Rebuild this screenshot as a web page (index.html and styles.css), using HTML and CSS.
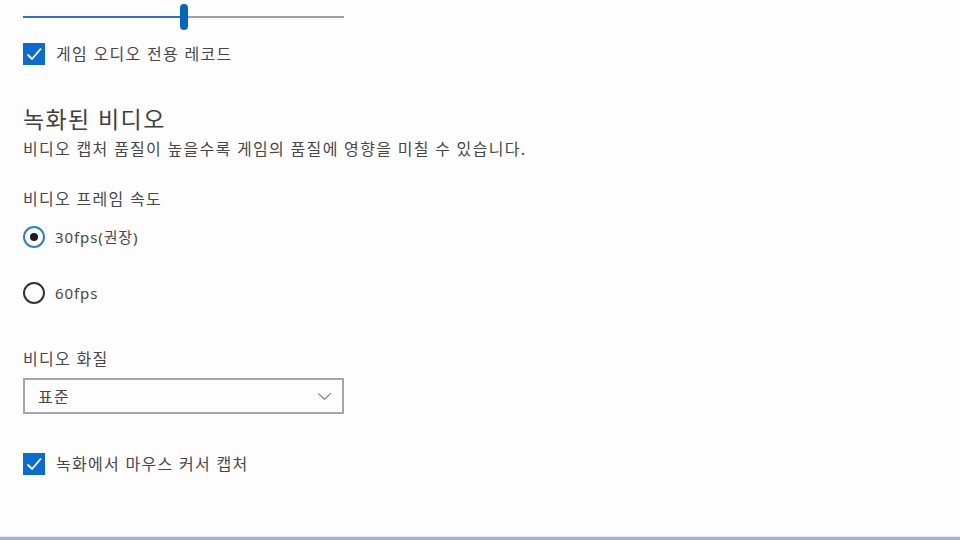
FILE: index.html
```html
<!DOCTYPE html>
<html lang="ko">
<head>
<meta charset="utf-8">
<link rel="stylesheet" href="styles.css">
</head>
<body>
<div class="page">
  <div class="slider">
    <div class="track-fill"></div>
    <div class="thumb"></div>
    <div class="track-rest"></div>
  </div>

  <label class="check row-audio">
    <span class="box"><svg viewBox="0 0 20 20" width="20" height="20"><path d="M3.5 10.5 L8 15 L17 4.5" fill="none" stroke="#fff" stroke-width="1.8"/></svg></span>
    <span class="label">게임 오디오 전용 레코드</span>
  </label>

  <h2 class="title">녹화된 비디오</h2>
  <p class="desc">비디오 캡처 품질이 높을수록 게임의 품질에 영향을 미칠 수 있습니다.</p>

  <div class="field-label fps-label">비디오 프레임 속도</div>

  <div class="radios">
    <div class="radio checked"><span class="ring"><span class="dot"></span></span><span class="rlabel">30fps(권장)</span></div>
    <div class="radio"><span class="ring"></span><span class="rlabel">60fps</span></div>
  </div>

  <div class="field-label quality-label">비디오 화질</div>
  <div class="select">
    <span class="value">표준</span>
    <svg class="chev" viewBox="0 0 16 10" width="15" height="9"><path d="M1 1.5 L8 8 L15 1.5" fill="none" stroke="#7a7a7a" stroke-width="1.2"/></svg>
  </div>

  <label class="check row-cursor">
    <span class="box"><svg viewBox="0 0 20 20" width="20" height="20"><path d="M3.5 10.5 L8 15 L17 4.5" fill="none" stroke="#fff" stroke-width="1.8"/></svg></span>
    <span class="label">녹화에서 마우스 커서 캡처</span>
  </label>
</div>
<div class="bottom-line"></div>
</body>
</html>
```

FILE: styles.css
```css
html, body {
  margin: 0;
  padding: 0;
  background: #fdfdfd;
  width: 960px;
  height: 540px;
  overflow: hidden;
}
body {
  font-family: "Noto Sans", "Noto Sans CJK KR", sans-serif;
  color: #444;
  position: relative;
}
.page {
  padding-left: 23px;
  display: flex;
  flex-direction: column;
  align-items: flex-start;
  height: 537px;
}
.slider {
  width: 321px;
  height: 26px;
  margin-top: 4px;
  display: flex;
  align-items: center;
}
.track-fill {
  width: 157px;
  height: 2px;
  background: #2f6fcb;
}
.thumb {
  width: 8px;
  height: 26px;
  border-radius: 4px;
  background: #0067c0;
}
.track-rest {
  flex: 1;
  height: 2px;
  background: #a0a0a0;
}
.check {
  display: flex;
  align-items: center;
  gap: 11px;
}
.box {
  width: 22px;
  height: 22px;
  background: #0a6bd0;
  display: flex;
  align-items: center;
  justify-content: center;
}
.label {
  font-size: 16px;
  letter-spacing: 1.3px;
  color: #474747;
  line-height: 22px;
}
.rlabel {
  font-size: 15px;
  letter-spacing: 0.9px;
  color: #474747;
  line-height: 22px;
}
.row-audio { margin-top: 13px; }
.title {
  margin: 39px 0 0;
  font-size: 23px;
  font-weight: 400;
  letter-spacing: 1.4px;
  line-height: 30px;
  color: #404040;
}
.desc {
  margin: 4px 0 0;
  font-size: 16px;
  letter-spacing: 1.3px;
  line-height: 22px;
  color: #474747;
}
.field-label {
  font-size: 16px;
  letter-spacing: 1.3px;
  line-height: 22px;
  color: #474747;
}
.fps-label { margin-top: 28px; }
.radios {
  display: flex;
  flex-direction: column;
  gap: 34px;
  margin-top: 16px;
}
.radio {
  display: flex;
  align-items: center;
  gap: 10px;
}
.ring {
  width: 18px;
  height: 18px;
  border: 2px solid #333;
  border-radius: 50%;
  display: flex;
  align-items: center;
  justify-content: center;
}
.radio.checked .ring { border-color: #2a7fd4; }
.dot {
  width: 8px;
  height: 8px;
  border-radius: 50%;
  background: #1e1e1e;
}
.quality-label { margin-top: 44px; }
.select {
  margin-top: 8px;
  width: 317px;
  height: 32px;
  border: 2px solid #a6a6a6;
  display: flex;
  align-items: center;
  justify-content: space-between;
  box-sizing: content-box;
}
.select .value {
  margin-left: 13px;
  font-size: 16px;
  letter-spacing: 1.3px;
  color: #474747;
}
.select .chev { margin-right: 10px; }
.row-cursor { margin-top: 39px; }
.bottom-line {
  position: absolute;
  left: 0;
  right: 0;
  bottom: 0;
  height: 3px;
  background: #9fb8c9;
  border-top: 1px solid #e3ecf2;
}
```
